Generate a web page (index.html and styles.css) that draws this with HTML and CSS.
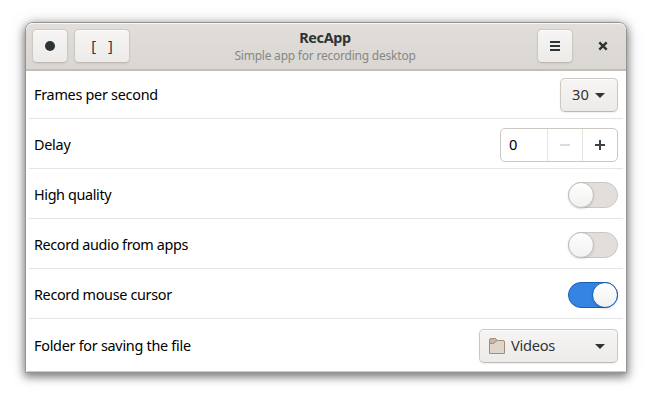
FILE: index.html
```
<!DOCTYPE html>
<html lang="en">
<head>
<meta charset="utf-8">
<title>RecApp</title>
<link rel="stylesheet" href="styles.css">
</head>
<body>
<main class="window">
  <header class="headerbar">
    <div class="start">
      <button class="btn icon" aria-label="Record"><svg width="16" height="16" viewBox="0 0 16 16"><circle cx="8" cy="8" r="5" fill="#2e3436"/></svg></button>
      <button class="btn area"><span>[</span><span>]</span></button>
    </div>
    <div class="titles">
      <h1 class="title">RecApp</h1>
      <p class="subtitle">Simple app for recording desktop</p>
    </div>
    <div class="end">
      <button class="btn icon" aria-label="Menu"><svg width="16" height="16" viewBox="0 0 16 16"><path d="M3 3h10v2H3zM3 7h10v2H3zM3 11h10v2H3z" fill="#2e3436"/></svg></button>
      <button class="close" aria-label="Close"><svg width="16" height="16" viewBox="0 0 16 16"><path d="M4.300 4.300l7.400 7.400M11.700 4.300l-7.400 7.400" stroke="#2e3436" stroke-width="2.400"/></svg></button>
    </div>
  </header>
  <section class="list">
    <div class="row">
      <span class="label fps">Frames per second</span>
      <button class="btn combo"><span class="text">30</span><svg width="16" height="16" viewBox="0 0 16 16"><path d="M3 6h10l-5 5z" fill="#2e3436"/></svg></button>
    </div>
    <div class="row">
      <span class="label delay">Delay</span>
      <div class="spin">
        <span class="value">0</span>
        <button class="step" aria-label="Decrease"><svg width="16" height="16" viewBox="0 0 16 16"><path d="M3 7h10v2H3z" fill="#dcdcdb"/></svg></button>
        <button class="step" aria-label="Increase"><svg width="16" height="16" viewBox="0 0 16 16"><path d="M7 3h2v4h4v2H9v4H7V9H3V7h4z" fill="#3b4143"/></svg></button>
      </div>
    </div>
    <div class="row">
      <span class="label quality">High quality</span>
      <div class="switch"><span class="knob"></span></div>
    </div>
    <div class="row">
      <span class="label audio">Record audio from apps</span>
      <div class="switch"><span class="knob"></span></div>
    </div>
    <div class="row">
      <span class="label cursor">Record mouse cursor</span>
      <div class="switch on"><span class="knob"></span></div>
    </div>
    <div class="row last">
      <span class="label folder">Folder for saving the file</span>
      <button class="btn chooser">
        <svg width="16" height="16" viewBox="0 0 16 16"><path d="M.5 15.500v-13q0-2 2-2h3q1.500 0 2 1l.5 1h6q1.500 0 1.500 1.500v11.500z" fill="#ded5cb" stroke="#a08d7c"/><path d="M.5 5.500v-3q0-2 2-2h3q1.500 0 2 1l.5 1-1.500 1.500q-1.500 1.500-3 1.500z" fill="#c8b5a3" stroke="#a08d7c"/></svg>
        <span class="text place">Videos</span>
        <svg width="16" height="16" viewBox="0 0 16 16"><path d="M3 6h10l-5 5z" fill="#2e3436"/></svg>
      </button>
    </div>
  </section>
</main>
</body>
</html>
```
FILE: styles.css
```
* { box-sizing: border-box; }
body {
  margin: 0;
  padding: 22px 25px 28px;
  background: #fff;
  color: #000;
  font: 14.67px/20px "Noto Sans", sans-serif;
}
button { margin: 0; padding: 0; font: inherit; color: #2e3436; }
svg { display: block; flex: none; }
.window {
  width: 602px;
  height: 351px;
  border: 1px solid #949390;
  border-radius: 8px 8px 0 0;
  background: #fff;
  box-shadow: 0 3px 9px 1px rgba(0,0,0,.46), 0 1px 18px rgba(0,0,0,.15);
}
.headerbar {
  display: grid;
  grid-template-columns: 1fr auto 1fr;
  height: 48px;
  padding: 6px 6px 0;
  border-bottom: 2px solid #c3beb7;
  border-radius: 7px 7px 0 0;
  background: linear-gradient(#e1dedb, #dad6d2);
  box-shadow: inset 0 1px #f7f6f5;
}
.start, .end { display: flex; gap: 6px; }
.end { justify-content: flex-end; }
.btn {
  display: flex;
  align-items: center;
  justify-content: center;
  height: 34px;
  border: 1px solid #cdc7c2;
  border-bottom-color: #bfb8b1;
  border-radius: 5px;
  background: linear-gradient(#f6f5f4, #edebe9);
  box-shadow: inset 0 1px rgba(255,255,255,.8), 0 1px 2px rgba(0,0,0,.07);
}
.icon { width: 36px; }
.area { width: 56px; gap: 12px; padding-bottom: 2px; }
.close {
  display: flex;
  align-items: center;
  justify-content: center;
  width: 34px;
  height: 34px;
  margin-left: 7px;
  border: 0;
  background: none;
}
.titles { padding-right: 2px; text-align: center; color: #2e3436; }
.title { margin: -1px 0 0; font-size: 14.4px; line-height: 20px; font-weight: 700; letter-spacing: -.35px; }
.subtitle { margin: 0; font-size: 12px; line-height: 16px; letter-spacing: -.22px; color: #858887; }
.list { margin: 0 1px; height: 301px; border-bottom: 1px solid #cfccc7; }
.row {
  display: flex;
  align-items: center;
  justify-content: space-between;
  height: 50px;
  margin: 0 2px;
  padding: 9px 5px 6px;
  border-bottom: 1px solid #e5e5e5;
}
.row:first-child { height: 48px; padding-top: 7px; }
.last { height: 52px; padding: 10px 5px 8px; border: 0; }
.label { font-size: 14.4px; }
.fps { letter-spacing: -.27px; }
.delay { letter-spacing: -.25px; }
.quality { letter-spacing: -.37px; }
.audio { letter-spacing: -.37px; }
.cursor { letter-spacing: -.33px; }
.folder { letter-spacing: -.27px; }
.text { padding-bottom: 2px; }
.combo { width: 58px; gap: 3px; padding-left: 2px; }
.spin {
  display: flex;
  width: 118px;
  height: 34px;
  border: 1px solid #cdc7c2;
  border-radius: 5px;
}
.value { flex: 1; padding: 5px 8px; }
.step {
  display: flex;
  align-items: center;
  justify-content: center;
  width: 35px;
  border: 0;
  border-left: 1px solid #e6e3e1;
  background: none;
}
.switch {
  display: flex;
  width: 50px;
  height: 26px;
  border: 1px solid #cdc7c2;
  border-radius: 13px;
  background: #e1dedb;
}
.knob {
  width: 26px;
  height: 26px;
  margin: -1px;
  border: 1px solid #c4bdb6;
  border-radius: 50%;
  background: linear-gradient(#fff, #f1f1f0);
  box-shadow: 0 1px 2px rgba(0,0,0,.15);
}
.on { justify-content: flex-end; border-color: #185fb4; background: #3584e4; }
.on .knob { border-color: #185fb4; }
.chooser { width: 139px; justify-content: flex-start; padding: 0 9px; }
.place { flex: 1; margin-left: 6px; text-align: left; letter-spacing: -.3px; }
```
